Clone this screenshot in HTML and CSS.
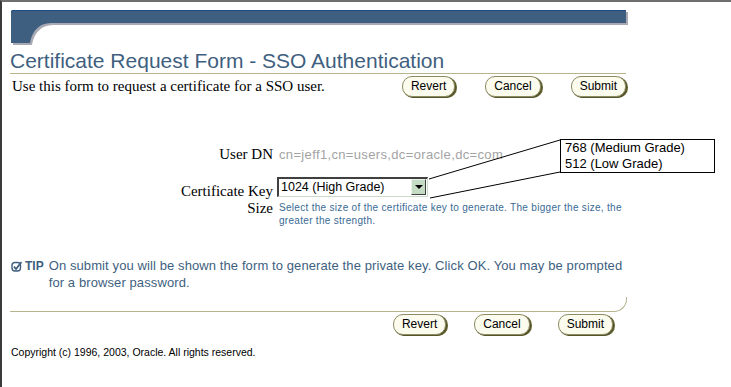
FILE: index.html
```html
<!DOCTYPE html>
<html lang="en">
<head>
<meta charset="utf-8">
<title>Certificate Request Form - SSO Authentication</title>
<link rel="stylesheet" href="styles.css">
</head>
<body>
<div class="frame">
  <svg class="brand-bar" width="620" height="36" viewBox="0 0 620 36" aria-hidden="true">
    <path d="M2,4 Q2,2 4,2 H617 V15 H44 C32,15 24,20 21,35 H2 Z" fill="#a9a9b4"/>
    <path d="M0,2 Q0,0 2,0 H615 V13 H42 C30,13 22,18 19,33 H0 Z" fill="#3f5f80"/>
    <path d="M0.5,2 Q0.5,0.5 2,0.5 H615" stroke="#1d4a86" stroke-width="1" fill="none"/>
  </svg>

  <h1 class="title">Certificate Request Form - SSO Authentication</h1>

  <div class="intro-row">
    <span class="intro">Use this form to request a certificate for a SSO user.</span>
    <div class="btn-group top-group">
      <button class="pill">Revert</button>
      <button class="pill">Cancel</button>
      <button class="pill">Submit</button>
    </div>
  </div>

  <div class="form-grid">
    <div class="label">User DN</div>
    <div class="value dn">cn=jeff1,cn=users,dc=oracle,dc=com</div>

    <div class="label key-label"><span class="wrap">Certificate Key Size</span></div>
    <div class="value">
      <div class="select">
        <span class="select-text">1024 (High Grade)</span>
        <span class="select-btn"><span class="tri"></span></span>
      </div>
      <p class="help">Select the size of the certificate key to generate. The bigger the size, the greater the strength.</p>
    </div>
  </div>

  <div class="tip">
    <svg class="tip-icon" width="11" height="11" viewBox="0 0 11 11" aria-hidden="true">
      <rect x="1" y="1.5" width="8.5" height="8.5" rx="3" fill="none" stroke="#3e5f80" stroke-width="1.4"/>
      <path d="M3,5.5 L5,8 L10.5,1" fill="none" stroke="#3e5f80" stroke-width="1.8"/>
    </svg>
    <span class="tip-label">TIP</span>
    <span class="tip-text">On submit you will be shown the form to generate the private key. Click OK. You may be prompted for a browser password.</span>
  </div>

  <div class="footer-rule"></div>

  <div class="btn-group bottom-group">
    <button class="pill">Revert</button>
    <button class="pill">Cancel</button>
    <button class="pill">Submit</button>
  </div>

  <p class="copyright">Copyright (c) 1996, 2003, Oracle. All rights reserved.</p>

  <svg class="callout-lines" width="140" height="64" viewBox="0 0 140 64" aria-hidden="true">
    <line x1="0" y1="40" x2="131" y2="1" stroke="#000" stroke-width="1"/>
    <line x1="1" y1="59" x2="131" y2="33" stroke="#000" stroke-width="1"/>
  </svg>
  <div class="callout-box">
    <div>768 (Medium Grade)</div>
    <div>512 (Low Grade)</div>
  </div>
</div>
</body>
</html>
```

FILE: styles.css
```css
html, body {
  margin: 0;
  padding: 0;
  background: #ffffff;
}

.frame {
  position: relative;
  box-sizing: border-box;
  width: 731px;
  height: 387px;
  border-top: 2px solid #6e6e6e;
  border-left: 2px solid #3a3a3a;
  padding: 8px 0 0 8px;
}

.brand-bar {
  display: block;
  margin-left: 1px;
}

.title {
  margin: 3px 0 0 0;
  width: 616px;
  font-family: "Liberation Sans", Arial, sans-serif;
  font-weight: normal;
  font-size: 21px;
  line-height: 24px;
  color: #3f5f80;
  border-bottom: 1px solid #b5b48c;
}

.intro-row {
  display: flex;
  align-items: flex-start;
  width: 616px;
  padding-top: 2px;
}

.intro {
  font-family: "Liberation Serif", "Times New Roman", serif;
  font-size: 15px;
  line-height: 21px;
  color: #000;
  padding-left: 2px;
}

.btn-group {
  display: flex;
  gap: 30px;
}

.top-group {
  margin-left: auto;
}

.pill {
  box-sizing: border-box;
  height: 21px;
  padding: 0 8px;
  border: 1px solid #8d8b62;
  border-radius: 10px;
  background: #fbfbee;
  box-shadow: 1px 1px 0 #55542a, 2px 1px 0 #6a6938;
  font-family: "Liberation Sans", Arial, sans-serif;
  font-size: 12px;
  line-height: 19px;
  color: #000;
}

.form-grid {
  display: grid;
  grid-template-columns: 263px 1fr;
  column-gap: 4px;
  row-gap: 1px;
  margin-top: 49px;
  width: 616px;
}

.label {
  font-family: "Liberation Serif", "Times New Roman", serif;
  font-size: 15px;
  line-height: 17px;
  text-align: right;
  color: #000;
}

.key-label {
  padding-top: 6px;
}

.key-label .wrap {
  display: inline-block;
  width: 100px;
  text-align: right;
}

.value {
  font-family: "Liberation Sans", Arial, sans-serif;
  font-size: 12px;
  line-height: 17px;
}

.dn {
  font-size: 13px;
  letter-spacing: 0.35px;
  color: #a3a3a3;
  padding-left: 2px;
  margin-bottom: 13px;
}

.select {
  box-sizing: border-box;
  display: flex;
  align-items: stretch;
  width: 151px;
  height: 20px;
  border-top: 2px solid #404040;
  border-left: 2px solid #404040;
  border-right: 1px solid #c8dcc8;
  border-bottom: 1px solid #c8dcc8;
  background: #fff;
}

.select-text {
  flex: 1;
  font-size: 12.5px;
  line-height: 17px;
  padding-left: 2px;
  color: #000;
}

.select-btn {
  box-sizing: border-box;
  width: 15px;
  margin: 0 1px 1px 0;
  background: #c3dcc3;
  border-top: 1px solid #e8f2e8;
  border-left: 1px solid #e8f2e8;
  border-right: 1px solid #404040;
  border-bottom: 1px solid #404040;
  display: flex;
  align-items: center;
  justify-content: center;
}

.tri {
  width: 0;
  height: 0;
  border-left: 4px solid transparent;
  border-right: 4px solid transparent;
  border-top: 4px solid #000;
}

.help {
  margin: 4px 0 0 2px;
  width: 348px;
  font-family: "Liberation Sans", Arial, sans-serif;
  font-size: 10px;
  line-height: 13px;
  letter-spacing: 0.3px;
  color: #3a6a95;
}

.tip {
  display: flex;
  align-items: baseline;
  margin-top: 30px;
  width: 616px;
  font-family: "Liberation Sans", Arial, sans-serif;
  line-height: 17px;
  color: #3e5f80;
}

.tip-icon {
  flex: none;
  align-self: flex-start;
  margin: 4px 3px 0 1px;
}

.tip-label {
  font-size: 12px;
  font-weight: bold;
  margin-right: 5px;
  color: #3e5f80;
}

.tip-text {
  width: 576px;
  font-size: 13px;
  letter-spacing: 0.1px;
}

.footer-rule {
  box-sizing: border-box;
  width: 617px;
  height: 15px;
  margin-top: 6px;
  border-bottom: 1px solid #b5b48c;
  border-right: 1px solid #b5b48c;
  border-bottom-right-radius: 13px;
}

.bottom-group {
  width: 603px;
  justify-content: flex-end;
  gap: 28px;
  margin-top: 2px;
}

.copyright {
  margin: 11px 0 0 1px;
  font-family: "Liberation Sans", Arial, sans-serif;
  font-size: 10.5px;
  line-height: 12px;
  color: #000;
}

.callout-lines {
  position: absolute;
  left: 427px;
  top: 137px;
}

.callout-box {
  position: absolute;
  left: 558px;
  top: 137px;
  box-sizing: border-box;
  width: 155px;
  height: 34px;
  border: 1px solid #000;
  background: #fff;
  padding: 0 0 0 4px;
  font-family: "Liberation Sans", Arial, sans-serif;
  font-size: 13px;
  line-height: 16px;
  color: #000;
}
```
